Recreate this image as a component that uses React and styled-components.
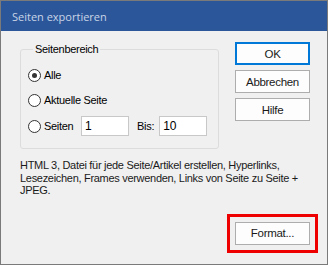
import React from "react";
import styled, { createGlobalStyle } from "styled-components";

const Global = createGlobalStyle`
  html, body { margin: 0; padding: 0; background: #f0f0f0; }
  * { box-sizing: border-box; }
`;

const Window = styled.div`
  width: 328px;
  height: 265px;
  border: 1px solid #7a7a7a;
  display: flex;
  flex-direction: column;
  background: #f0f0f0;
  font-family: "Liberation Sans", Arial, sans-serif;
  font-size: 11px;
  letter-spacing: -0.3px;
  color: #000;
`;

const TitleBar = styled.div`
  height: 30px;
  flex: none;
  background: #2b579a;
  color: #c9d4e6;
  display: flex;
  align-items: center;
  padding-left: 11px;
  font-family: "Open Sans", "Noto Sans", sans-serif;
  font-size: 11px;
  letter-spacing: 0;
`;

const Body = styled.div`
  flex: 1;
  display: flex;
  flex-direction: column;
  padding: 11px 17px 0 19px;
`;

const TopRow = styled.div`
  display: flex;
  align-items: flex-start;
  gap: 16px;
`;

const Group = styled.fieldset`
  margin: 0;
  width: 199px;
  height: 107px;
  border: 1px solid #dcdcdc;
  border-radius: 3px;
  padding: 9px 0 0 7px;
  display: flex;
  flex-direction: column;
`;

const Legend = styled.legend`
  padding: 0 2px;
  margin-left: 5px;
  line-height: 14px;
`;

const RadioRow = styled.label`
  display: flex;
  align-items: center;
  height: ${(p) => p.$h}px;
  gap: 3px;
`;

const RadioCircle = styled.span`
  width: 13px;
  height: 13px;
  border-radius: 50%;
  border: 1px solid #333;
  background: #fff;
  display: flex;
  align-items: center;
  justify-content: center;
  flex: none;
  &::after {
    content: "";
    width: 5px;
    height: 5px;
    border-radius: 50%;
    background: ${(p) => (p.$checked ? "#333" : "transparent")};
  }
`;

const Label = styled.span`
  width: ${(p) => (p.$w ? `${p.$w}px` : "auto")};
  flex: none;
`;

const TextInput = styled.div`
  width: 48px;
  height: 20px;
  border: 1px solid #c8c8c8;
  background: #fff;
  display: flex;
  align-items: center;
  padding-left: 3px;
  flex: none;
  font-size: 12px;
  letter-spacing: 0;
`;

const BisLabel = styled.span`
  margin: 0 2px 0 5px;
`;

const ButtonCol = styled.div`
  display: flex;
  flex-direction: column;
  gap: 5px;
`;

const Button = styled.div`
  width: 75px;
  height: 23px;
  background: #fdfdfd;
  border: ${(p) => (p.$default ? "2px solid #0078d7" : "1px solid #adadad")};
  display: flex;
  align-items: center;
  justify-content: center;
  font-size: 11.5px;
  color: #1a1a1a;
  outline: ${(p) => (p.$marked ? "3px solid #ee0000" : "none")};
  outline-offset: 5px;
`;

const Description = styled.p`
  margin: 10px 0 0 0;
  line-height: 12.6px;
  color: #1a1a1a;
`;

const Footer = styled.div`
  display: flex;
  justify-content: flex-end;
  margin-top: 25px;
`;

export default function App() {
  return (
    <>
      <Global />
      <Window>
        <TitleBar>Seiten exportieren</TitleBar>
        <Body>
          <TopRow>
            <Group>
              <Legend>Seitenbereich</Legend>
              <RadioRow $h={20}>
                <RadioCircle $checked />
                <Label>Alle</Label>
              </RadioRow>
              <RadioRow $h={30}>
                <RadioCircle />
                <Label>Aktuelle Seite</Label>
              </RadioRow>
              <RadioRow $h={22}>
                <RadioCircle />
                <Label $w={34}>Seiten</Label>
                <TextInput>1</TextInput>
                <BisLabel>Bis:</BisLabel>
                <TextInput>10</TextInput>
              </RadioRow>
            </Group>
            <ButtonCol>
              <Button $default>OK</Button>
              <Button>Abbrechen</Button>
              <Button>Hilfe</Button>
            </ButtonCol>
          </TopRow>
          <Description>
            HTML 3, Datei für jede Seite/Artikel erstellen, Hyperlinks,
            Lesezeichen, Frames verwenden, Links von Seite zu Seite + JPEG.
          </Description>
          <Footer>
            <Button $marked>Format...</Button>
          </Footer>
        </Body>
      </Window>
    </>
  );
}
